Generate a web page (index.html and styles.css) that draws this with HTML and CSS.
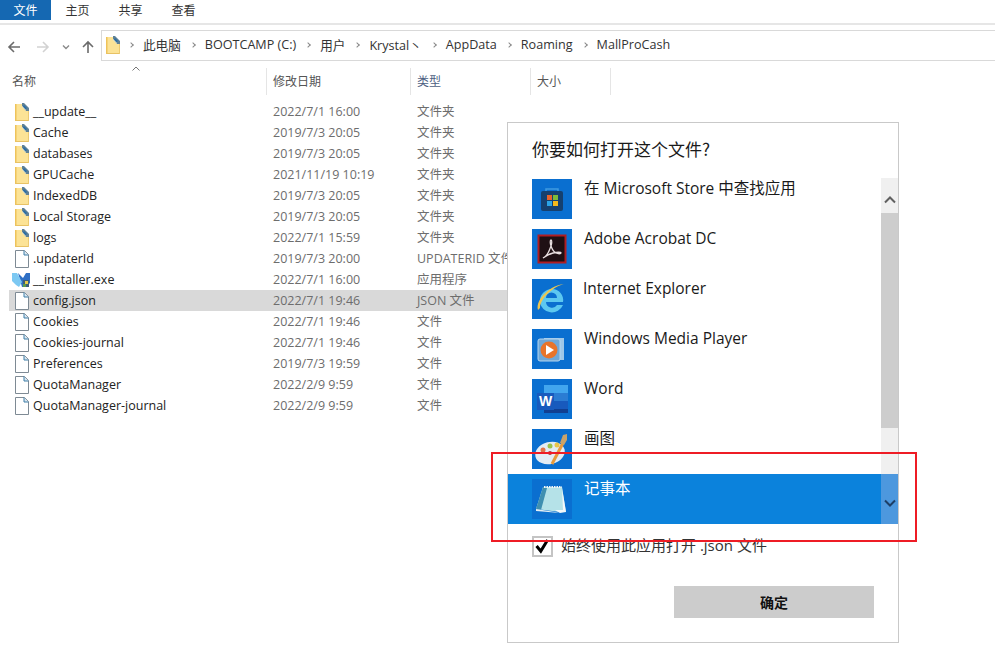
FILE: index.html
```html
<!DOCTYPE html>
<html lang="zh">
<head>
<meta charset="utf-8">
<title>MallProCash</title>
<link rel="stylesheet" href="styles.css">
</head>
<body>
<svg class="defs" width="0" height="0">
  <defs>
    <symbol id="folder" viewBox="0 0 14 18">
      <path d="M0 1h8l6 6v11H0z" fill="#fce396"/>
      <path d="M0 1h1.500v17H0z" fill="#eec35a"/>
      <path d="M0 17h14v1H0z" fill="#e8c264"/>
      <path d="M13 7h1v11h-1z" fill="#ecca72"/>
      <path d="M7 0h2l5 5v3h-3L7 3z" fill="#5f8196"/>
      <path d="M9 2l3 3-1.500 1.500L8 3.500z" fill="#2c6ea6"/>
      <path d="M7 3l4 4v1L7 4z" fill="#dfe3d0"/>
    </symbol>
    <symbol id="file" viewBox="0 0 14 18">
      <path d="M.5.5h9l4 4v13H.5z" fill="#fff" stroke="#7e8a94"/>
      <path d="M9 .5v4.500h4.500" fill="#d8e6f0" stroke="#3f7fa8"/>
    </symbol>
    <symbol id="updown" viewBox="0 0 12 8"><path d="M1 6.500l5-5 5 5" fill="none" stroke="currentColor" stroke-width="2"/></symbol>
  </defs>
</svg>

<div class="explorer">
  <nav class="tabs">
    <span class="tab tab-file">文件</span>
    <span class="tab">主页</span>
    <span class="tab">共享</span>
    <span class="tab">查看</span>
  </nav>

  <div class="navbar">
    <div class="nav-buttons">
      <svg class="nav-ico" viewBox="0 0 14 14"><path d="M13 7H2M7 2L2 7l5 5" fill="none" stroke="#6b6b6b" stroke-width="1.600"/></svg>
      <svg class="nav-ico" viewBox="0 0 14 14"><path d="M1 7h11M7 2l5 5-5 5" fill="none" stroke="#d2d2d2" stroke-width="1.600"/></svg>
      <svg class="nav-small" viewBox="0 0 8 6"><path d="M1 1.500l3 3 3-3" fill="none" stroke="#8a8a8a" stroke-width="1.400"/></svg>
      <svg class="nav-ico up" viewBox="0 0 14 14"><path d="M7 13V2M2 7l5-5 5 5" fill="none" stroke="#6b6b6b" stroke-width="1.600"/></svg>
    </div>
    <div class="address">
      <svg class="addr-folder"><use href="#folder"/></svg>
      <span class="chev"></span><span class="crumb">此电脑</span>
      <span class="chev"></span><span class="crumb">BOOTCAMP (C:)</span>
      <span class="chev"></span><span class="crumb">用户</span>
      <span class="chev"></span><span class="crumb">Krystal丶</span>
      <span class="chev"></span><span class="crumb">AppData</span>
      <span class="chev"></span><span class="crumb">Roaming</span>
      <span class="chev"></span><span class="crumb">MallProCash</span>
    </div>
  </div>

  <div class="cols head">
    <span class="col-name">名称<svg class="sort" viewBox="0 0 8 5"><path d="M.5 4.500L4 1l3.500 3.500" fill="none" stroke="#777"/></svg></span>
    <span class="col-date">修改日期</span>
    <span class="col-type type-head">类型</span>
    <span class="col-size">大小</span>
  </div>

  <div class="rows">
    <div class="cols row"><span class="col-name"><svg class="ico"><use href="#folder"/></svg>__update__</span><span class="col-date">2022/7/1 16:00</span><span class="col-type">文件夹</span></div>
    <div class="cols row"><span class="col-name"><svg class="ico"><use href="#folder"/></svg>Cache</span><span class="col-date">2019/7/3 20:05</span><span class="col-type">文件夹</span></div>
    <div class="cols row"><span class="col-name"><svg class="ico"><use href="#folder"/></svg>databases</span><span class="col-date">2019/7/3 20:05</span><span class="col-type">文件夹</span></div>
    <div class="cols row"><span class="col-name"><svg class="ico"><use href="#folder"/></svg>GPUCache</span><span class="col-date">2021/11/19 10:19</span><span class="col-type">文件夹</span></div>
    <div class="cols row"><span class="col-name"><svg class="ico"><use href="#folder"/></svg>IndexedDB</span><span class="col-date">2019/7/3 20:05</span><span class="col-type">文件夹</span></div>
    <div class="cols row"><span class="col-name"><svg class="ico"><use href="#folder"/></svg>Local Storage</span><span class="col-date">2019/7/3 20:05</span><span class="col-type">文件夹</span></div>
    <div class="cols row"><span class="col-name"><svg class="ico"><use href="#folder"/></svg>logs</span><span class="col-date">2022/7/1 15:59</span><span class="col-type">文件夹</span></div>
    <div class="cols row"><span class="col-name"><svg class="ico"><use href="#file"/></svg>.updaterId</span><span class="col-date">2019/7/3 20:00</span><span class="col-type">UPDATERID 文件</span></div>
    <div class="cols row"><span class="col-name"><svg class="ico exe" viewBox="0 0 18 16"><path d="M6 1l5 5 3-5h4v10l-4 4H10z" fill="#2f6fc4"/><path d="M0 1h5l5 9-3 5-3-2-4-4z" fill="#7cc8f2"/><path d="M11 8h6v7h-6z" fill="#3e5f7d"/><path d="M13 9h3v3h-3z" fill="#e6c94a"/><path d="M11 12h3v3h-3z" fill="#5c9a4a"/></svg>__installer.exe</span><span class="col-date">2022/7/1 16:00</span><span class="col-type">应用程序</span></div>
    <div class="cols row selected"><span class="col-name"><svg class="ico"><use href="#file"/></svg>config.json</span><span class="col-date">2022/7/1 19:46</span><span class="col-type">JSON 文件</span></div>
    <div class="cols row"><span class="col-name"><svg class="ico"><use href="#file"/></svg>Cookies</span><span class="col-date">2022/7/1 19:46</span><span class="col-type">文件</span></div>
    <div class="cols row"><span class="col-name"><svg class="ico"><use href="#file"/></svg>Cookies-journal</span><span class="col-date">2022/7/1 19:46</span><span class="col-type">文件</span></div>
    <div class="cols row"><span class="col-name"><svg class="ico"><use href="#file"/></svg>Preferences</span><span class="col-date">2019/7/3 19:59</span><span class="col-type">文件</span></div>
    <div class="cols row"><span class="col-name"><svg class="ico"><use href="#file"/></svg>QuotaManager</span><span class="col-date">2022/2/9 9:59</span><span class="col-type">文件</span></div>
    <div class="cols row"><span class="col-name"><svg class="ico"><use href="#file"/></svg>QuotaManager-journal</span><span class="col-date">2022/2/9 9:59</span><span class="col-type">文件</span></div>
  </div>
</div>

<section class="dialog">
  <h1 class="dlg-title">你要如何打开这个文件?</h1>
  <div class="picker">
    <ul class="apps">
      <li class="app">
        <svg class="tile" viewBox="0 0 40 40"><rect width="40" height="40" fill="#0a6fd0"/><path d="M14 12v-2h12v2" fill="none" stroke="#3f9be0" stroke-width="1.500"/><rect x="9" y="12" width="22" height="20" rx="2" fill="#15406f"/><rect x="15" y="16" width="5" height="5" fill="#e8632b"/><rect x="21" y="16" width="5" height="5" fill="#7ebb3a"/><rect x="15" y="22" width="5" height="5" fill="#2aa3e6"/><rect x="21" y="22" width="5" height="5" fill="#f3b91b"/></svg>
        <span class="app-name">在 Microsoft Store 中查找应用</span>
      </li>
      <li class="app">
        <svg class="tile" viewBox="0 0 40 40"><rect width="40" height="40" fill="#0a6fd0"/><rect x="6.500" y="6.500" width="27" height="27" fill="#1f1014" stroke="#b01e23" stroke-width="2"/><path d="M11 29c3-1 6-6 8-12 1-3 1-6 0-6s-1 3 0 6c1 3 3 6 5 7 2 1 5 1 5 0s-4-1-8 0c-4 1-7 3-10 5z" fill="none" stroke="#e9dfe0" stroke-width="1.300"/></svg>
        <span class="app-name">Adobe Acrobat DC</span>
      </li>
      <li class="app">
        <svg class="tile" viewBox="0 0 40 40"><rect width="40" height="40" fill="#0a6fd0"/><path d="M8 23a12 12 0 0 1 12-13 11 11 0 0 1 11 13H14a6 6 0 0 0 11 3h6a12 12 0 0 1-23-3zm6-4h11a5.500 5.500 0 0 0-11 0z" fill="#5cc8f0"/><path d="M6 31C3 20 20 5 33 5c-10 1-25 14-25 24z" fill="#eec650"/></svg>
        <span class="app-name ie">Internet Explorer</span>
      </li>
      <li class="app">
        <svg class="tile" viewBox="0 0 40 40"><rect width="40" height="40" fill="#0a6fd0"/><rect x="12" y="9" width="20" height="22" fill="#9fc8e8"/><rect x="6" y="10" width="22" height="22" rx="2" fill="#6fa8d8" stroke="#b5d5ee"/><circle cx="17" cy="21" r="8.500" fill="#e8742a"/><path d="M14 16l8 5-8 5z" fill="#fff"/></svg>
        <span class="app-name">Windows Media Player</span>
      </li>
      <li class="app">
        <svg class="tile" viewBox="0 0 40 40"><rect width="40" height="40" fill="#0a6fd0"/><rect x="12" y="6" width="24" height="8" fill="#41a5ee"/><rect x="12" y="14" width="24" height="8" fill="#2b7cd3"/><rect x="12" y="22" width="24" height="8" fill="#185abd"/><rect x="12" y="30" width="24" height="4" fill="#103f91"/><rect x="5" y="14" width="17" height="17" fill="#185abd"/><text x="13.500" y="27" class="w-letter">W</text></svg>
        <span class="app-name">Word</span>
      </li>
      <li class="app">
        <svg class="tile" viewBox="0 0 40 40"><rect width="40" height="40" fill="#0a6fd0"/><ellipse cx="18" cy="24" rx="15" ry="11" fill="#e3ecf4" transform="rotate(-14 18 24)"/><circle cx="18" cy="17" r="2.500" fill="#9bc24a"/><circle cx="25" cy="16" r="2.500" fill="#e8c54a"/><circle cx="11" cy="21" r="2.500" fill="#e0744a"/><circle cx="18" cy="24" r="2" fill="#b5353a"/><path d="M20 35L31 14" stroke="#e89a3a" stroke-width="3"/><path d="M28 14l3-8 4-1 0 6-3 5z" fill="#c9a36a"/></svg>
        <span class="app-name">画图</span>
      </li>
      <li class="app current">
        <svg class="tile" viewBox="0 0 40 40"><rect width="40" height="40" fill="#0a6fd0"/><path d="M11 8h19l4 25-6 0L4 30z" fill="#b5e2e8"/><path d="M11 8L4 30l5 1 6-22z" fill="#3f8fb0"/><path d="M30 9l4 24-6 1-5-3 8 0z" fill="#f4f8fa"/><path d="M4 30l19 3 5 1-24-2z" fill="#e4eef4"/><path d="M12 8h18" stroke="#eef4f6" stroke-width="2" stroke-dasharray="1.500 1"/></svg>
        <span class="app-name">记事本</span>
      </li>
    </ul>
    <div class="scrollbar">
      <div class="sb-up"><svg class="sb-arrow"><use href="#updown"/></svg></div>
      <div class="sb-thumb"></div>
      <div class="sb-track"></div>
      <div class="sb-down"><svg class="sb-arrow flip"><use href="#updown"/></svg></div>
    </div>
  </div>
  <label class="always">
    <span class="box"><svg viewBox="0 0 20 20" width="20" height="20"><path d="M3 10l5 6 8-13" fill="none" stroke="#000" stroke-width="3.500"/></svg></span>
    <span class="always-text">始终使用此应用打开 .json 文件</span>
  </label>
  <div class="dlg-foot"><button class="ok" type="button">确定</button></div>
</section>

<div class="callout"></div>
</body>
</html>
```
FILE: styles.css
```css
* { box-sizing: border-box; }
html, body { margin: 0; padding: 0; background: #fff; }
body {
  width: 995px; height: 669px; overflow: hidden; position: relative;
  font-family: "Open Sans", "Noto Sans CJK SC", sans-serif;
  font-size: 12.5px; color: #2b2b2b;
}
.defs { position: absolute; }

.tabs {
  display: flex; height: 25px; border-bottom: 2px solid #e6e6e6; padding-bottom: 3px;
}
.tab { width: 53px; text-align: center; line-height: 19px; font-size: 12px; color: #333; font-family: "Noto Sans CJK SC", sans-serif; }
.tab-file { width: 51px; background: #1568b2; color: #fff; }

.navbar { display: flex; height: 31px; margin-top: 5px; }
.nav-buttons { width: 101px; display: flex; align-items: center; padding-left: 7px; padding-top: 2px; }
.nav-ico { width: 14px; height: 14px; flex: none; }
.nav-buttons .nav-ico:nth-child(2) { margin-left: 15px; }
.nav-small { width: 8px; height: 6px; margin-left: 12px; flex: none; }
.nav-ico.up { margin-left: 11px; }
.address {
  flex: 1; display: flex; align-items: center; border: 1px solid #d9d9d9; border-right: 0;
  padding: 0 0 2px 4px; font-size: 12.6px; color: #333;
}
.addr-folder { width: 14px; height: 18px; margin-right: 9px; }
.chev {
  width: 4px; height: 4px; border-top: 1.500px solid #888; border-right: 1.500px solid #888;
  transform: rotate(45deg); margin-right: 10px; flex: none;
}
.crumb { margin-right: 10px; white-space: nowrap; }

.cols { display: grid; grid-template-columns: 264px 144px 120px 80px; align-items: center; }
.head { height: 27px; margin-top: 7px; margin-left: 3px; color: #4d6082; font-size: 12px; font-family: "Noto Sans CJK SC", sans-serif; }
.head > span { height: 27px; line-height: 25px; padding-left: 6px; border-right: 1px solid #e5e5e5; }
.head .col-name { padding-left: 9px; position: relative; color: #555; }
.head .col-date, .head .col-size { color: #555; }
.sort { position: absolute; left: 129px; top: -2px; width: 8px; height: 5px; }
.type-head { color: #4d6082; }

.rows { margin-top: 6px; padding-left: 9px; }
.row { height: 21px; grid-template-columns: 264px 144px 90px; line-height: 21px; color: #6d6d6d; width: 498px; }
.row > span { white-space: nowrap; }
.row .col-name { display: flex; align-items: center; color: #222; padding-left: 6px; }
.row .col-date { padding-left: 0; }
.row.selected { background: #d9d9d9; }
.ico { width: 14px; height: 18px; margin-right: 4px; flex: none; }
.ico.exe { width: 18px; height: 16px; margin-left: -3px; margin-right: 3px; }

.dialog {
  position: absolute; left: 507px; top: 122px; width: 392px; height: 521px;
  background: #fff; border: 1px solid #c9c9c9; padding-top: 13px;
}
.dlg-title { margin: 0 0 13px 24px; font-size: 17px; line-height: 25px; font-weight: 400; color: #1a1a1a; font-family: "Noto Sans CJK SC", sans-serif; }
.picker { display: flex; height: 350px; }
.apps { list-style: none; margin: 0; padding: 0; width: 373px; }
.app { height: 50px; padding: 5px 0 0 24px; display: flex; align-items: flex-start; font-size: 15.5px; color: #1a1a1a; }
.tile { width: 40px; height: 40px; flex: none; margin-right: 12px; }
.app-name { line-height: 18px; white-space: nowrap; }
.app-name.ie { margin-left: -1px; }
.app.current { background: #0b82dc; color: #fff; }
.w-letter { font: bold 14px "Liberation Sans", sans-serif; fill: #fff; text-anchor: middle; }

.scrollbar { width: 17px; margin-top: 4px; display: flex; flex-direction: column; height: 346px; }
.sb-up { height: 35px; padding-top: 8px; background: #f0f0f0; display: flex; align-items: center; justify-content: center; color: #606060; }
.sb-thumb { height: 215px; background: #cdcdcd; }
.sb-track { height: 46px; background: #f0f0f0; }
.sb-down { height: 50px; padding-top: 7px; background: #4d98de; display: flex; align-items: center; justify-content: center; color: #1d3f66; }
.sb-arrow { width: 12px; height: 8px; }
.sb-arrow.flip { transform: rotate(180deg); }

.always { display: flex; align-items: center; margin: 12px 0 0 24px; height: 20px; font-size: 15px; color: #333; line-height: 18px; }
.always-text { margin-bottom: 3px; }
.box { width: 21px; height: 21px; border: 2px solid #c4c4c4; margin-right: 8px; flex: none; display: flex; align-items: center; justify-content: center; }
.dlg-foot { display: flex; justify-content: flex-end; padding: 30px 24px 0 0; }
.ok {
  width: 200px; height: 32px; border: 0; background: #cccccc; color: #111; padding: 0;
  font: bold 14px "Noto Sans CJK SC", sans-serif;
}

.callout { position: absolute; left: 491px; top: 452px; width: 426px; height: 90px; border: 2px solid #ee1c25; }
```
